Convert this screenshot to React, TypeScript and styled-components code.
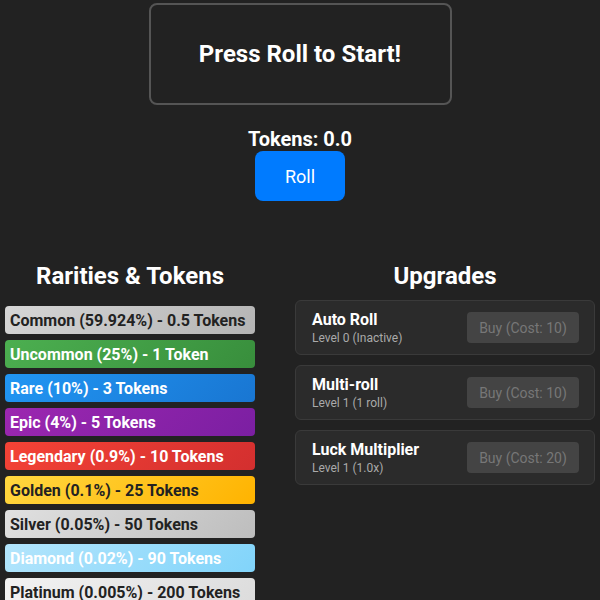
import React from 'react';
import styled, { createGlobalStyle } from 'styled-components';

const GlobalStyle = createGlobalStyle`
  body {
    margin: 0;
    background: #222222;
    color: #ffffff;
    font-family: Roboto, "Noto Sans", Arial, sans-serif;
  }
`;

interface Rarity {
  name: string;
  chance: string;
  tokens: string;
  from: string;
  to: string;
  dark?: boolean;
}

interface Upgrade {
  title: string;
  level: string;
  cost: number;
}

const rarities: Rarity[] = [
  { name: 'Common', chance: '59.924%', tokens: '0.5 Tokens', from: '#d6d6d6', to: '#b4b4b4', dark: true },
  { name: 'Uncommon', chance: '25%', tokens: '1 Token', from: '#4caf50', to: '#388e3c' },
  { name: 'Rare', chance: '10%', tokens: '3 Tokens', from: '#2196f3', to: '#1976d2' },
  { name: 'Epic', chance: '4%', tokens: '5 Tokens', from: '#9c27b0', to: '#7b1fa2' },
  { name: 'Legendary', chance: '0.9%', tokens: '10 Tokens', from: '#f44336', to: '#d32f2f' },
  { name: 'Golden', chance: '0.1%', tokens: '25 Tokens', from: '#ffd740', to: '#ffb300', dark: true },
  { name: 'Silver', chance: '0.05%', tokens: '50 Tokens', from: '#e0e0e0', to: '#bdbdbd', dark: true },
  { name: 'Diamond', chance: '0.02%', tokens: '90 Tokens', from: '#b3e5fc', to: '#81d4fa' },
  { name: 'Platinum', chance: '0.005%', tokens: '200 Tokens', from: '#f2f2f2', to: '#dcdcdc', dark: true },
];

const upgrades: Upgrade[] = [
  { title: 'Auto Roll', level: 'Level 0 (Inactive)', cost: 10 },
  { title: 'Multi-roll', level: 'Level 1 (1 roll)', cost: 10 },
  { title: 'Luck Multiplier', level: 'Level 1 (1.0x)', cost: 20 },
];

const Page = styled.div`
  display: flex;
  flex-direction: column;
  align-items: center;
  padding-top: 3px;
`;

const ResultBox = styled.div`
  width: 299px;
  height: 98px;
  border: 2px solid #555555;
  border-radius: 8px;
  display: flex;
  align-items: center;
  justify-content: center;
  font-size: 24px;
  font-weight: 700;
`;

const TokenCount = styled.div`
  margin-top: 22px;
  font-size: 20px;
  font-weight: 700;
  line-height: 24px;
`;

const RollButton = styled.button`
  width: 90px;
  height: 50px;
  border: none;
  border-radius: 8px;
  background: #007bff;
  color: #ffffff;
  font-family: inherit;
  font-size: 18px;
  cursor: pointer;
`;

const Columns = styled.div`
  align-self: stretch;
  display: flex;
  justify-content: space-between;
  padding: 0 5px;
  margin-top: 59px;
`;

const Column = styled.section<{ $width: number }>`
  width: ${(p) => p.$width}px;
  display: flex;
  flex-direction: column;
`;

const Heading = styled.h2`
  margin: 0;
  text-align: center;
  font-size: 24px;
  font-weight: 700;
  line-height: 32px;
`;

const RarityList = styled.div`
  margin-top: 14px;
  display: flex;
  flex-direction: column;
  gap: 6px;
`;

const RarityBar = styled.div<{ $from: string; $to: string; $dark?: boolean }>`
  height: 28px;
  padding: 0 5px;
  border-radius: 4px;
  display: flex;
  align-items: center;
  background: linear-gradient(135deg, ${(p) => p.$from}, ${(p) => p.$to});
  color: ${(p) => (p.$dark ? '#222222' : '#ffffff')};
  font-size: 16px;
  font-weight: 700;
  white-space: nowrap;
`;

const UpgradeList = styled.div`
  margin-top: 8px;
  display: flex;
  flex-direction: column;
  gap: 10px;
`;

const UpgradeCard = styled.div`
  height: 53px;
  padding: 0 15px 0 16px;
  background: #2b2b2b;
  border: 1px solid #3a3a3a;
  border-radius: 6px;
  display: flex;
  align-items: center;
  justify-content: space-between;
`;

const UpgradeInfo = styled.div`
  display: flex;
  flex-direction: column;
`;

const UpgradeTitle = styled.div`
  font-size: 16px;
  font-weight: 700;
  line-height: 19px;
`;

const UpgradeLevel = styled.div`
  margin-top: 1px;
  font-size: 12px;
  color: #aaaaaa;
  line-height: 16px;
`;

const BuyButton = styled.button`
  width: 112px;
  height: 31px;
  border: none;
  border-radius: 4px;
  background: #444444;
  color: #777777;
  font-family: inherit;
  font-size: 14px;
`;

export default function App() {
  return (
    <Page>
      <GlobalStyle />
      <ResultBox>Press Roll to Start!</ResultBox>
      <TokenCount>Tokens: 0.0</TokenCount>
      <RollButton>Roll</RollButton>
      <Columns>
        <Column $width={250}>
          <Heading>Rarities &amp; Tokens</Heading>
          <RarityList>
            {rarities.map((r) => (
              <RarityBar key={r.name} $from={r.from} $to={r.to} $dark={r.dark}>
                {r.name} ({r.chance}) - {r.tokens}
              </RarityBar>
            ))}
          </RarityList>
        </Column>
        <Column $width={300}>
          <Heading>Upgrades</Heading>
          <UpgradeList>
            {upgrades.map((u) => (
              <UpgradeCard key={u.title}>
                <UpgradeInfo>
                  <UpgradeTitle>{u.title}</UpgradeTitle>
                  <UpgradeLevel>{u.level}</UpgradeLevel>
                </UpgradeInfo>
                <BuyButton disabled>Buy (Cost: {u.cost})</BuyButton>
              </UpgradeCard>
            ))}
          </UpgradeList>
        </Column>
      </Columns>
    </Page>
  );
}
